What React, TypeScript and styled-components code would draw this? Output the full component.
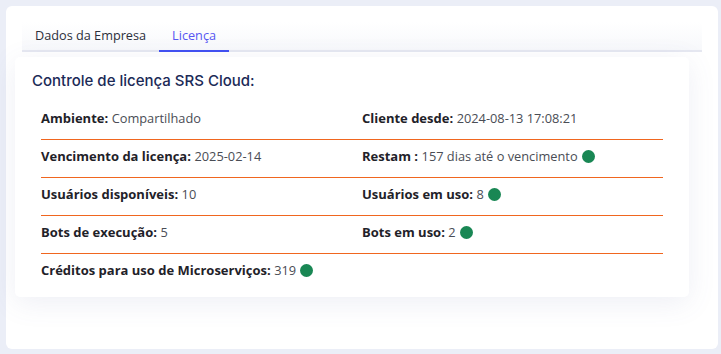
import React from "react";
import styled, { createGlobalStyle } from "styled-components";

interface IField {
  label: string;
  value: string;
  status?: boolean;
}

const ROWS: Array<[IField, IField | null]> = [
  [
    { label: "Ambiente:", value: "Compartilhado" },
    { label: "Cliente desde:", value: "2024-08-13 17:08:21" },
  ],
  [
    { label: "Vencimento da licença:", value: "2025-02-14" },
    { label: "Restam :", value: "157 dias até o vencimento", status: true },
  ],
  [
    { label: "Usuários disponíveis:", value: "10" },
    { label: "Usuários em uso:", value: "8", status: true },
  ],
  [
    { label: "Bots de execução:", value: "5" },
    { label: "Bots em uso:", value: "2", status: true },
  ],
  [{ label: "Créditos para uso de Microserviços:", value: "319", status: true }, null],
];

const TABS = ["Dados da Empresa", "Licença"];

const Field: React.FC<{ field: IField | null }> = ({ field }) => {
  if (!field) return <Cell />;
  return (
    <Cell>
      <Label>{field.label}</Label>
      <Value>{field.value}</Value>
      {field.status && <StatusDot />}
    </Cell>
  );
};

const App: React.FC = () => {
  return (
    <>
      <GlobalStyle />
      <Page>
        <Card>
          <TabBar>
            {TABS.map((tab, i) => (
              <Tab key={tab} $active={i === 1}>
                {tab}
              </Tab>
            ))}
          </TabBar>
          <LicenseCard>
            <Title>Controle de licença SRS Cloud:</Title>
            <Table>
              {ROWS.map(([left, right], i) => (
                <Row key={i} $bordered={i < ROWS.length - 1}>
                  <Field field={left} />
                  <Field field={right} />
                </Row>
              ))}
            </Table>
          </LicenseCard>
        </Card>
      </Page>
    </>
  );
};

const GlobalStyle = createGlobalStyle`
  html, body {
    margin: 0;
    padding: 0;
    background: #ebeef7;
  }
  body {
    font-family: "Open Sans", "Noto Sans", sans-serif;
  }
`;

const Page = styled.div`
  width: 721px;
  height: 354px;
  padding: 6px 3px 5px 6px;
  box-sizing: border-box;
`;

const Card = styled.div`
  height: 100%;
  background: #fff;
  border-radius: 6px;
  padding: 16px 16px 0 9px;
  box-sizing: border-box;
`;

const TabBar = styled.div`
  display: flex;
  height: 30px;
  box-sizing: border-box;
  margin-left: 7px;
  border-bottom: 2px solid #e6e8f1;
  background: linear-gradient(#ffffff, #f7f8fb);
`;

interface ITab {
  readonly $active: boolean;
}

const Tab = styled.div<ITab>`
  height: 30px;
  box-sizing: border-box;
  padding: 5px 13px 0;
  font-size: 12.7px;
  line-height: 17px;
  color: ${(p) => (p.$active ? "#5757f2" : "#2b2f3a")};
  border-bottom: 2px solid ${(p) => (p.$active ? "#4150f0" : "transparent")};
`;

const LicenseCard = styled.div`
  margin-top: 5px;
  width: 674px;
  height: 240px;
  box-sizing: border-box;
  background: #fff;
  border-radius: 5px;
  padding: 12px 26px 0 17px;
  box-shadow: 0 6px 28px rgba(90, 100, 160, 0.1);
`;

const Title = styled.div`
  font-family: Inter, "Noto Sans", sans-serif;
  font-size: 15px;
  font-weight: 500;
  height: 24px;
  line-height: 24px;
  color: #1b2a57;
  margin-bottom: 9px;
`;

const Table = styled.div`
  margin-left: 9px;
`;

interface IRow {
  readonly $bordered: boolean;
}

const Row = styled.div<IRow>`
  display: grid;
  grid-template-columns: 321px 1fr;
  align-items: center;
  height: 38px;
  padding-bottom: 5px;
  box-sizing: border-box;
  border-bottom: 1px solid ${(p) => (p.$bordered ? "#f0661f" : "transparent")};
`;

const Cell = styled.div`
  display: flex;
  align-items: center;
  font-size: 13px;
  line-height: 19px;
  white-space: nowrap;
`;

const Label = styled.span`
  font-weight: 700;
  color: #1f2229;
`;

const Value = styled.span`
  margin-left: 3.5px;
  font-size: 12.8px;
  color: #4a4d55;
`;

const StatusDot = styled.span`
  width: 13px;
  height: 13px;
  margin-left: 4px;
  border-radius: 50%;
  background: #198754;
`;

export default App;
